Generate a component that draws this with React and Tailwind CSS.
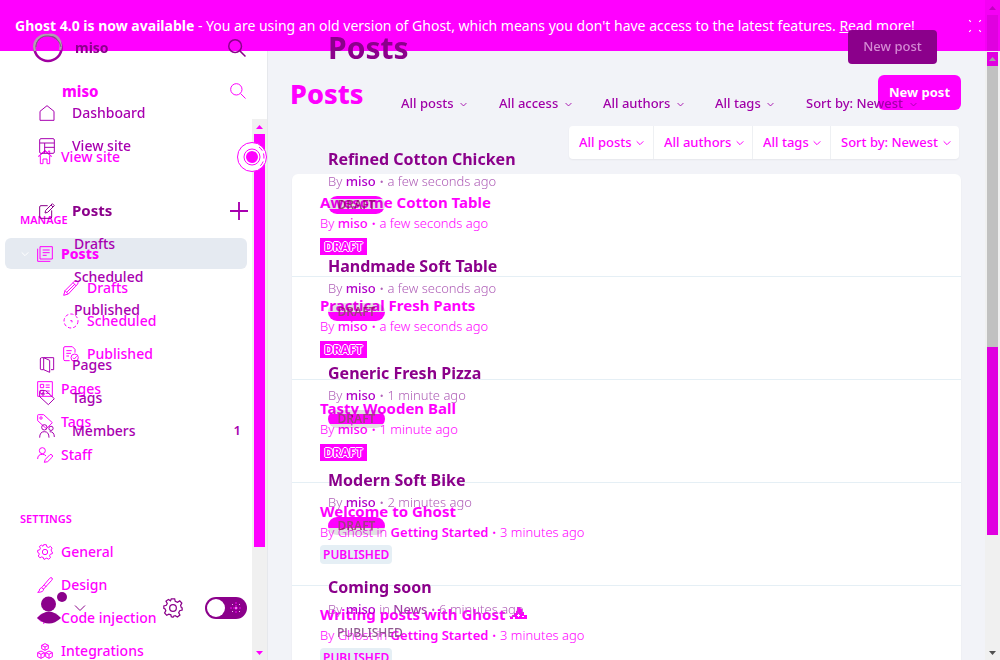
import React from "react";

const paths = {
  house: <path d="M3 11 12 3l9 8M5 10v12h4v-7h6v7h4V10M1.500 11.500 12 2l10.500 9.500M17 5V3h2v4" />,
  home: <path d="M1.500 9.500 12 1l10.500 8.500V23H1.500Z" />,
  browser: <path d="M1 3q0-2 2-2h18q2 0 2 2v18q0 2-2 2H3q-2 0-2-2ZM1 7.500h22M8.500 7.500V23M8.500 14H23" />,
  search: <><circle cx="9.500" cy="9.500" r="8.500" /><path d="m15.800 15.800 7.500 7.500" /></>,
  edit: <path d="M13 4H3Q1 4 1 6v15q0 2 2 2h14q2 0 2-2V11M9 15l1-4L20 1l3 3-10 10ZM18 3l3 3" />,
  stack: <path d="M4.500 1H23v18.500H4.500ZM1 4v19h19M8.500 6H19M8.500 10H19M8.500 14h6" />,
  pencil: <path d="m1 23 2-7L17.500 1.500q2-1.500 4 .500t.500 4L8 21ZM3 16l5 5M15 4l5 5M5.500 18.500 18 6" />,
  clock: <><circle cx="12" cy="12" r="10.500" strokeDasharray="5 3" /><path d="M11 11.500h2.500V14" /></>,
  published: <><path d="M10 22H3q-2 0-2-2V3q0-2 2-2h11l4 4v5M5 7h8M5 11h7M5 15h4" /><circle cx="17.500" cy="17.500" r="5.500" /><path d="m15 17.500 2 2 3.500-4" /></>,
  book: <path d="M7 1h15v18h-4M7 1l9 4v18l-9-4ZM7 1H4Q2 1 2 3v15q0 1 2 1h3" />,
  page: <path d="M1 1h22v22H1ZM5 5h5v5H5ZM5 14h5v5H5ZM13 6h6M13 9.500h6M13 15h6M13 18.500h6" />,
  tag: <><path d="M1 2q0-1 1-1h8l13 12-9 9L1 10Z" /><circle cx="6" cy="6" r="1.800" /></>,
  members: <><circle cx="8" cy="6.500" r="4" /><path d="M1 22q0-9 7-9t7 9M16 13q7 0 7 8" /><circle cx="18" cy="8" r="3.200" /></>,
  staff: <><circle cx="8" cy="5.500" r="4.500" /><path d="M1 18q0-7 7-7 4 0 5.500 2.500M11 23l1.500-4.500 7-7q1.500-1 3 .500t.500 3l-7 7Z" /></>,
  gear: <><path d="M10 1h4l.7 3 2.700 1.200 2.700-1.700 2.500 2.700-1.500 2.700L22 11.500l1 .5v2.500l-3 .8-1.200 2.300 1.500 2.800-3 2.400-2.600-1.600-2.200.6L12 23l-2-.5-.6-2.300-2.400-.8-2.600 1.400L1.900 18l1.500-2.700-.9-2.100L1 12.500V9.500l3-.7 1.100-2.300-1.500-2.800 2.900-2L9 3.400Z" /><circle cx="12" cy="12" r="4" /></>,
  brush: <path d="M1 23q3-1 3-5 2-4 6 0 0 5-9 5ZM7 16 19 2q2-2 3.500-.5T22 5L10 18M11 12l3 3" />,
  cubes: <path d="m12 1 5 2.500v5L12 11 7 8.500v-5ZM7 3.500 12 6l5-2.500M12 6v5M6 12l5 2.500v6L6 23l-5-2.500v-6ZM1 14.500 6 17l5-2.500M6 17v6M18 12l5 2.500v6L18 23l-5-2.500v-6Zm-5 2.500 5 2.500 5-2.500M18 17v6" />,
  code: <path d="m7 6-6 6 6 6M17 6l6 6-6 6M14 3l-4 18" />,
  plus: <path d="M12 0v24M0 12h24" />,
  chevron: <path d="m2 7 10 10L22 7" />,
  close: <path d="m2 2 20 20M22 2 2 22" strokeDasharray="4 20.300" />,
};

function Icon({ name, className = "size-4", stroke = 1.5 }) {
  return (
    <svg viewBox="0 0 24 24" fill="none" stroke="currentColor" strokeWidth={stroke} aria-hidden="true" className={`shrink-0 overflow-visible ${className}`}>
      {paths[name]}
    </svg>
  );
}

function Arrow({ down, className = "" }) {
  return (
    <svg viewBox="0 0 7 4" aria-hidden="true" className={`h-1 w-[7px] ${className}`} fill="currentColor">
      <path d={down ? "M0 0h7L3.500 4Z" : "M0 4h7L3.500 0Z"} />
    </svg>
  );
}

function NavLink({ icon, children, sub }) {
  return (
    <li>
      <a href="#" className={`flex h-[33px] items-center gap-2 text-sm font-medium text-[#ff00ff] ${sub ? "pl-[63px]" : "pl-[37px]"}`}>
        <Icon name={icon} />
        {children}
      </a>
    </li>
  );
}

function Banner() {
  return (
    <header className="flex h-[51px] shrink-0 bg-[#ff00ff] text-white">
      <p className="min-w-0 flex-1 self-center pl-[15px] text-sm whitespace-nowrap">
        <b>Ghost 4.0 is now available</b> - You are using an old version of Ghost, which means you don't have access to the latest features.{" "}
        <a href="#" className="underline">Read more!</a>
      </p>
      <button aria-label="Close" className="mr-[3px]"><Icon name="close" className="size-[14px]" stroke={2} /></button>
      <div className="flex w-[15px] flex-col items-center bg-[#f500f5] text-[#c000c0]">
        <div className="flex h-[15px] items-center"><Arrow /></div>
        <div className="w-[11px] flex-1 bg-[#e000e0]" />
      </div>
    </header>
  );
}

function Sidebar() {
  return (
    <aside className="flex w-[268px] shrink-0 flex-col border-r border-[#e6e8ec] bg-white text-[#ff00ff]">
      <div className="flex h-[68px] items-center justify-between pt-3 pr-[21px] pl-[62px]">
        <strong className="text-[15px] font-extrabold">miso</strong>
        <button aria-label="Search"><Icon name="search" /></button>
      </div>
      <div className="flex min-h-0 flex-1">
        <nav className="min-w-0 flex-1 overflow-hidden">
          <ul className="pt-[21px]"><NavLink icon="house">View site</NavLink></ul>
          <h2 className="mt-[31px] flex h-8 items-center pl-5 text-[11px] font-semibold">MANAGE</h2>
          <ul>
            <li className="my-0.5 mr-[5px] ml-[5px] flex h-[31px] items-center rounded-md bg-[#e5eaf1]">
              <button aria-label="Collapse posts" className="w-8 pl-4 text-white"><Icon name="chevron" className="size-2" stroke={3} /></button>
              <a href="#" className="flex items-center gap-2 text-sm font-extrabold"><Icon name="stack" />Posts</a>
            </li>
            <NavLink icon="pencil" sub>Drafts</NavLink>
            <NavLink icon="clock" sub>Scheduled</NavLink>
            <NavLink icon="published" sub>Published</NavLink>
          </ul>
          <ul className="mt-0.5">
            <NavLink icon="page">Pages</NavLink>
            <NavLink icon="tag">Tags</NavLink>
            <NavLink icon="staff">Staff</NavLink>
          </ul>
          <h2 className="mt-8 flex h-8 items-center pl-5 text-[11px] font-semibold">SETTINGS</h2>
          <ul>
            <NavLink icon="gear">General</NavLink>
            <NavLink icon="brush">Design</NavLink>
            <NavLink icon="code">Code injection</NavLink>
            <NavLink icon="cubes">Integrations</NavLink>
          </ul>
        </nav>
        <div className="relative flex w-[15px] flex-col items-center bg-[#f0f0f0]">
          <div className="flex h-[15px] items-center"><Arrow /></div>
          <div className="h-[413px] w-[11px] bg-[#ff00ff]" />
          <div className="mt-auto flex h-[15px] items-center"><Arrow down /></div>
          <svg viewBox="0 0 30 30" className="absolute top-[23px] -left-[15px] size-[30px]" fill="none" stroke="#ff00ff" aria-hidden="true">
            <circle cx="15" cy="15" r="14.500" fill="#fff" />
            <path d="M22 5a12.500 12.500 0 0 1 0 20" strokeDasharray="5 3" />
            <circle cx="15" cy="15" r="8" />
            <circle cx="15" cy="15" r="6" fill="#ff00ff" stroke="none" />
          </svg>
        </div>
      </div>
    </aside>
  );
}

function FilterA({ label, className }) {
  return (
    <div className={`flex items-center gap-1 border-r border-[#eef0f3] pl-2.5 last:border-0 ${className}`}>
      <select aria-label={label} className="appearance-none bg-transparent text-[13px] font-medium outline-none"><option>{label}</option></select>
      <Icon name="chevron" className="size-2" stroke={3} />
    </div>
  );
}

const postsA = [
  { title: "Awesome Cotton Table", author: "miso", time: "a few seconds ago" },
  { title: "Practical Fresh Pants", author: "miso", time: "a few seconds ago" },
  { title: "Tasty Wooden Ball", author: "miso", time: "1 minute ago" },
  { title: "Welcome to Ghost", tag: "Getting Started", time: "3 minutes ago" },
  { title: "Writing posts with Ghost", tag: "Getting Started", time: "3 minutes ago", emoji: true },
];

function Main() {
  return (
    <main className="flex min-w-0 flex-1 flex-col bg-[#f2f3f8] pt-6 pr-6 pl-[22px] text-[#ff00ff]">
      <div className="flex h-[35px] shrink-0 items-center justify-between">
        <h1 className="pt-1 text-[27px] font-extrabold">Posts</h1>
        <button className="h-full w-[83px] rounded-md bg-[#ff00ff] text-[13px] font-bold text-white">New post</button>
      </div>
      <div className="mt-4 flex h-[33px] shrink-0 justify-end pr-0.5">
        <div className="flex rounded bg-white shadow-xs">
          <FilterA label="All posts" className="w-[85px]" />
          <FilterA label="All authors" className="w-[99px]" />
          <FilterA label="All tags" className="w-[78px]" />
          <FilterA label="Sort by: Newest" className="w-[128px]" />
        </div>
      </div>
      <ul className="mt-[15px] ml-0.5 min-h-0 flex-1 overflow-hidden rounded-t-md bg-white shadow-xs">
        {postsA.map((p) => (
          <li key={p.title} className="flex h-[103px] flex-col items-start border-b border-[#e5eff5] pt-[19px] pl-[28px]">
            <h2 className="flex items-center gap-1 text-[15px] leading-[18px] font-bold">
              {p.title}
              {p.emoji && (
                <svg viewBox="0 0 18 14" className="h-[14px] w-[18px]" fill="currentColor" aria-hidden="true">
                  <path d="M7 0h3l1 2h1v3h2v3h3v4H5v-2H3v2H0v-2h2V8h2V6h2V4h1Z" />
                  <path d="M8 7h1v3H8ZM7 8h3v1H7ZM12 9h2v1h-2Z" fill="#fff" />
                </svg>
              )}
            </h2>
            <p className="mt-0.5 text-[13px] leading-5 font-light">
              By {p.author ? <b className="font-medium">{p.author}</b> : "Ghost in "}
              {p.tag && <b className="font-semibold">{p.tag}</b>} • {p.time}
            </p>
            {p.tag ? (
              <span className="mt-[3px] flex h-[19px] items-center rounded-sm bg-[#e5eff5] px-[3px] text-xs font-semibold">PUBLISHED</span>
            ) : (
              <span className="mt-[5px] flex h-[17px] w-[47px] items-center justify-center bg-[#ff00ff] text-xs font-bold [text-shadow:1px_0_#fff,-1px_0_#fff,0_1px_#fff,0_-1px_#fff]">DRAFT</span>
            )}
          </li>
        ))}
      </ul>
    </main>
  );
}

function PageScrollbar() {
  return (
    <div className="flex w-[15px] shrink-0 flex-col items-center bg-[#f0f0f0]">
      <div className="mt-px flex h-[14px] w-[11px] items-center justify-center bg-[#e000e0] text-[#a3a3a3]"><Arrow /></div>
      <div className="w-[11px] basis-[281px] bg-[#c1c1c1]" />
      <div className="w-[11px] basis-[188px] bg-[#e000e0]" />
      <div className="mt-auto flex h-[15px] items-center text-[#505050]"><Arrow down /></div>
    </div>
  );
}

function NavLinkB({ icon, children, bold }) {
  return (
    <a href="#" className={`flex h-[33px] items-center gap-[17px] pl-[39px] ${bold ? "text-[15px] font-bold text-[#8b008b]" : "text-sm font-medium text-[#a800b0]"}`}>
      <Icon name={icon} />
      {children}
    </a>
  );
}

function SidebarB() {
  return (
    <aside className="flex w-[268px] shrink-0 flex-col pt-8 text-[#a800b0]">
      <div className="flex h-8 items-center pr-[22px] pl-8 text-[#8b008b]">
        <svg viewBox="0 0 32 32" className="size-8" fill="none" aria-hidden="true">
          <ellipse cx="16" cy="16" rx="13.500" ry="13" stroke="#a000a0" strokeWidth="2.500" />
          <path d="M3 19C0 9 8 2 16 3c8-2 15 6 12 15" stroke="#b0a0b0" strokeWidth="2.500" />
          <path d="M4 15C4 8 10 3 17 4c6 1 11 5 12 11" stroke="#806080" />
        </svg>
        <strong className="ml-[11px] flex-1 text-sm">miso</strong>
        <button aria-label="Search site"><Icon name="search" className="size-[18px]" stroke={2} /></button>
      </div>
      <nav className="mt-8">
        <NavLinkB icon="home">Dashboard</NavLinkB>
        <NavLinkB icon="browser">View site</NavLinkB>
        <div className="mt-8 flex items-center justify-between pr-5">
          <NavLinkB icon="edit" bold>Posts</NavLinkB>
          <button aria-label="Create post"><Icon name="plus" className="size-[18px]" stroke={2.5} /></button>
        </div>
        {["Drafts", "Scheduled", "Published"].map((t) => (
          <a key={t} href="#" className="flex h-[33px] items-center pl-[74px] text-sm font-medium">{t}</a>
        ))}
        <div className="mt-[22px]">
          <NavLinkB icon="book">Pages</NavLinkB>
          <NavLinkB icon="tag">Tags</NavLinkB>
          <div className="flex items-center justify-between pr-[27px]">
            <NavLinkB icon="members">Members</NavLinkB>
            <span className="text-[13px] font-semibold">1</span>
          </div>
        </div>
      </nav>
      <div className="mt-auto mb-[34px] flex h-9 items-center pr-[21px] pl-[37px] text-[#8b008b]">
        <button aria-label="Account" className="flex items-center gap-1.5">
          <svg viewBox="0 0 31 34" className="h-[34px] w-[31px]" fill="currentColor" aria-hidden="true">
            <circle cx="11.500" cy="13" r="7.500" />
            <path d="M0 27q12-13 24 0-12 11-24 0Z" />
            <circle cx="25" cy="6" r="5" />
          </svg>
          <Icon name="chevron" className="size-3" stroke={2} />
        </button>
        <button aria-label="Settings" className="mr-[22px] ml-auto"><Icon name="gear" className="size-5" /></button>
        <label className="flex h-[22px] w-[42px] cursor-pointer items-center justify-between rounded-full bg-[#8b008b] pr-1 pl-0.5">
          <input type="checkbox" role="switch" aria-label="Night mode" className="sr-only" />
          <span className="size-[18px] rounded-full bg-white" />
          <svg viewBox="0 0 14 14" className="size-[14px]" fill="none" aria-hidden="true">
            <path d="M7 1v12M1 7h12" stroke="#d000d0" strokeWidth="1.500" strokeDasharray="2 1" />
            <path d="M3 3l1 1M11 3l-1 1M3 11l1-1M11 11l-1-1M7 6v2M6 7h2" stroke="#f0c0f0" />
          </svg>
        </label>
      </div>
    </aside>
  );
}

function FilterB({ label, className }) {
  return (
    <div className={`flex items-center gap-1.5 ${className}`}>
      <select aria-label={`Filter ${label}`} className="appearance-none bg-transparent text-[13px] font-medium outline-none"><option>{label}</option></select>
      <Icon name="chevron" className="size-[7px]" stroke={3} />
    </div>
  );
}

const postsB = [
  { title: "Refined Cotton Chicken", time: "a few seconds ago", pill: "bg-[linear-gradient(#ff00ff_3px,#e2e2e2_3px_13px,#ff00ff_13px)]" },
  { title: "Handmade Soft Table", time: "a few seconds ago", pill: "bg-[linear-gradient(#e2e2e2_9px,#ff00ff_9px)]" },
  { title: "Generic Fresh Pizza", time: "1 minute ago", pill: "bg-[linear-gradient(#e2e2e2_4px,#ff00ff_4px_14px,#e2e2e2_14px)]" },
  { title: "Modern Soft Bike", time: "2 minutes ago", pill: "bg-[linear-gradient(#ff00ff_11px,#e2e2e2_11px)]" },
  { title: "Coming soon", tag: "News", time: "6 minutes ago" },
];

function MainB() {
  return (
    <section className="flex min-w-0 flex-1 flex-col pt-[30px] pr-[63px] pl-[60px] text-[#a000a8]">
      <div className="flex h-[34px] shrink-0 items-center justify-between text-[#8b008b]">
        <h2 className="text-[30px] font-bold">Posts</h2>
        <button className="h-full w-[89px] rounded-sm bg-[#8b008b] text-[13px] font-medium text-[#d48ad4]">New post</button>
      </div>
      <div className="mt-6 flex h-8 shrink-0 justify-end">
        <FilterB label="All posts" className="w-[98px]" />
        <FilterB label="All access" className="w-[104px]" />
        <FilterB label="All authors" className="w-[112px]" />
        <FilterB label="All tags" className="w-[91px]" />
        <FilterB label="Sort by: Newest" className="w-[131px]" />
      </div>
      <ul className="mt-[27px] min-h-0 flex-1 overflow-hidden">
        {postsB.map((p) => (
          <li key={p.title} className="flex h-[107px] flex-col items-start">
            <h3 className="text-base leading-6 font-bold text-[#8b008b]">{p.title}</h3>
            <p className="text-[13px] leading-5 font-light text-[#b060b8]">
              By <b className="font-medium text-[#b000c8]">miso</b>
              {p.tag && <> in <b className="font-medium text-[#a040a8]">{p.tag}</b></>} • {p.time}
            </p>
            {p.pill ? (
              <span className={`mt-[5px] flex h-[18px] w-[57px] items-center justify-center rounded-full text-xs font-semibold text-[#a04080] mix-blend-multiply ${p.pill}`}>DRAFT</span>
            ) : (
              <span className="mt-[5px] flex h-[18px] items-center px-[9px] text-xs font-medium text-[#905890]">PUBLISHED</span>
            )}
          </li>
        ))}
      </ul>
    </section>
  );
}

export default function App() {
  return (
    <div className="relative flex h-screen flex-col overflow-hidden font-['Noto_Sans',sans-serif]">
      <Banner />
      <div className="flex min-h-0 flex-1">
        <Sidebar />
        <Main />
        <PageScrollbar />
      </div>
      <div className="absolute inset-0 flex">
        <SidebarB />
        <MainB />
      </div>
    </div>
  );
}
